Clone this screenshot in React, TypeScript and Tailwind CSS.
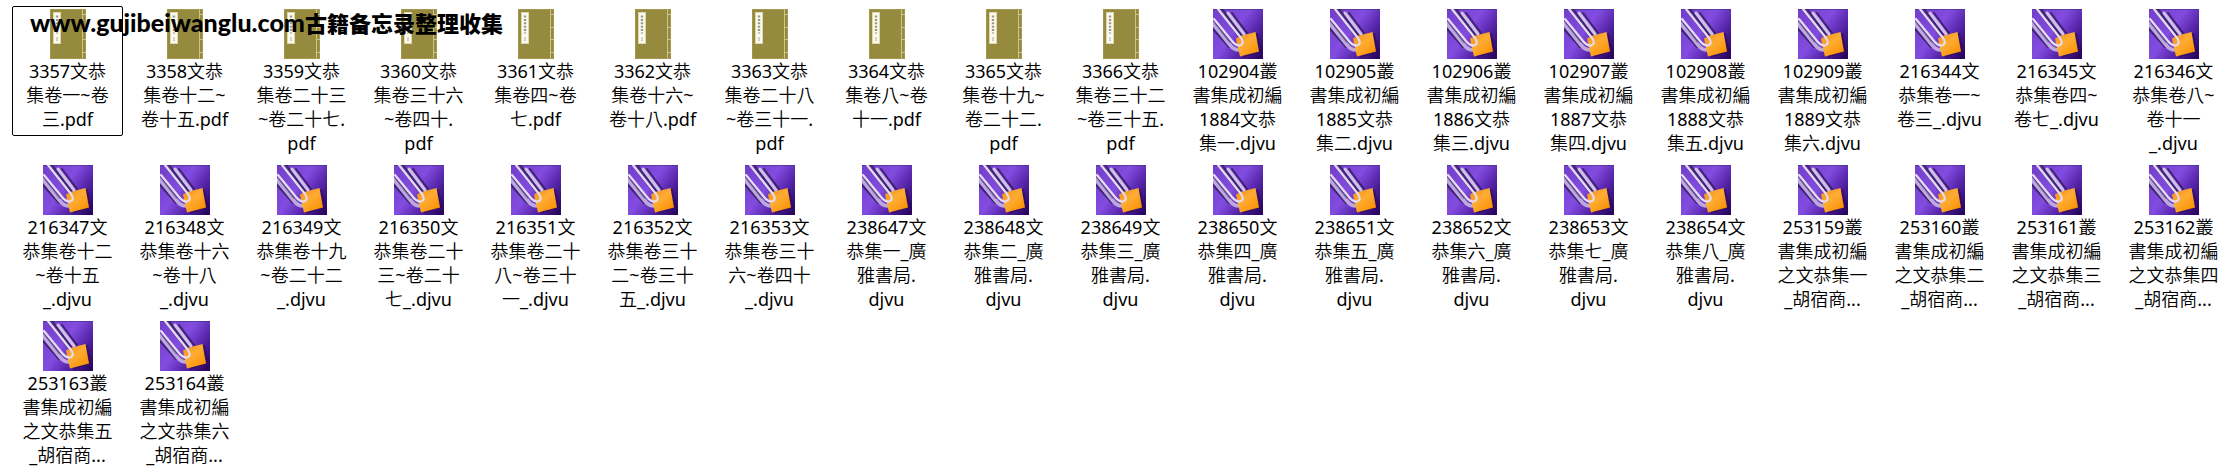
type FileKind = 'pdf' | 'djvu'

interface FileEntry {
  kind: FileKind
  lines: string[]
}

const pdf = (...lines: string[]): FileEntry => ({ kind: 'pdf', lines })
const djvu = (...lines: string[]): FileEntry => ({ kind: 'djvu', lines })

const files: FileEntry[] = [
  pdf('3357文恭', '集卷一~卷', '三.pdf'),
  pdf('3358文恭', '集卷十二~', '卷十五.pdf'),
  pdf('3359文恭', '集卷二十三', '~卷二十七.', 'pdf'),
  pdf('3360文恭', '集卷三十六', '~卷四十.', 'pdf'),
  pdf('3361文恭', '集卷四~卷', '七.pdf'),
  pdf('3362文恭', '集卷十六~', '卷十八.pdf'),
  pdf('3363文恭', '集卷二十八', '~卷三十一.', 'pdf'),
  pdf('3364文恭', '集卷八~卷', '十一.pdf'),
  pdf('3365文恭', '集卷十九~', '卷二十二.', 'pdf'),
  pdf('3366文恭', '集卷三十二', '~卷三十五.', 'pdf'),
  djvu('102904叢', '書集成初編', '1884文恭', '集一.djvu'),
  djvu('102905叢', '書集成初編', '1885文恭', '集二.djvu'),
  djvu('102906叢', '書集成初編', '1886文恭', '集三.djvu'),
  djvu('102907叢', '書集成初編', '1887文恭', '集四.djvu'),
  djvu('102908叢', '書集成初編', '1888文恭', '集五.djvu'),
  djvu('102909叢', '書集成初編', '1889文恭', '集六.djvu'),
  djvu('216344文', '恭集卷一~', '卷三_.djvu'),
  djvu('216345文', '恭集卷四~', '卷七_.djvu'),
  djvu('216346文', '恭集卷八~', '卷十一', '_.djvu'),
  djvu('216347文', '恭集卷十二', '~卷十五', '_.djvu'),
  djvu('216348文', '恭集卷十六', '~卷十八', '_.djvu'),
  djvu('216349文', '恭集卷十九', '~卷二十二', '_.djvu'),
  djvu('216350文', '恭集卷二十', '三~卷二十', '七_.djvu'),
  djvu('216351文', '恭集卷二十', '八~卷三十', '一_.djvu'),
  djvu('216352文', '恭集卷三十', '二~卷三十', '五_.djvu'),
  djvu('216353文', '恭集卷三十', '六~卷四十', '_.djvu'),
  djvu('238647文', '恭集一_廣', '雅書局.', 'djvu'),
  djvu('238648文', '恭集二_廣', '雅書局.', 'djvu'),
  djvu('238649文', '恭集三_廣', '雅書局.', 'djvu'),
  djvu('238650文', '恭集四_廣', '雅書局.', 'djvu'),
  djvu('238651文', '恭集五_廣', '雅書局.', 'djvu'),
  djvu('238652文', '恭集六_廣', '雅書局.', 'djvu'),
  djvu('238653文', '恭集七_廣', '雅書局.', 'djvu'),
  djvu('238654文', '恭集八_廣', '雅書局.', 'djvu'),
  djvu('253159叢', '書集成初編', '之文恭集一', '_胡宿商...'),
  djvu('253160叢', '書集成初編', '之文恭集二', '_胡宿商...'),
  djvu('253161叢', '書集成初編', '之文恭集三', '_胡宿商...'),
  djvu('253162叢', '書集成初編', '之文恭集四', '_胡宿商...'),
  djvu('253163叢', '書集成初編', '之文恭集五', '_胡宿商...'),
  djvu('253164叢', '書集成初編', '之文恭集六', '_胡宿商...'),
]

/** Thread-bound book cover, used as the PDF thumbnail. */
function BookIcon() {
  return (
    <svg viewBox="0 0 36 50" className="h-[50px] w-9" aria-hidden="true">
      <rect width="36" height="50" fill="#a79c55" />
      <rect x="0.7" y="0.7" width="34.6" height="48.6" fill="#958a3d" />
      <rect x="3" y="3" width="8" height="32" fill="#ddd8ae" />
      <rect x="4" y="4" width="6" height="30" fill="#fbfaf0" />
      <path
        d="M7 6.5v18"
        stroke="#9c9983"
        strokeWidth="2.4"
        strokeDasharray="2 1.4"
      />
      <path d="M7 28.5v3.5" stroke="#a3a08a" strokeWidth="1.4" strokeDasharray="1.2 0.8" />
      <path
        d="M32.5 0.5v49M32.5 5.5H36M32.5 18.5H36M32.5 30.5H36M32.5 43.5H36"
        stroke="#d3cb92"
        strokeWidth="0.9"
      />
    </svg>
  )
}

function DjvuGradients() {
  return (
    <svg className="absolute size-0" aria-hidden="true">
      <defs>
        <linearGradient id="djvu-bg" x1="0" y1="0.15" x2="1" y2="0.85">
          <stop offset="0" stopColor="#7440cc" />
          <stop offset="0.42" stopColor="#824ce0" />
          <stop offset="0.68" stopColor="#5a28ae" />
          <stop offset="1" stopColor="#2b0763" />
        </linearGradient>
        <linearGradient id="djvu-tag" x1="0" y1="0" x2="0.8" y2="1">
          <stop offset="0" stopColor="#f0901c" />
          <stop offset="0.5" stopColor="#ffac33" />
          <stop offset="1" stopColor="#f98f00" />
        </linearGradient>
      </defs>
    </svg>
  )
}

/** Paper clip holding an orange tag on a purple tile. */
function DjvuIcon() {
  return (
    <svg viewBox="0 0 50 50" className="size-[50px]" aria-hidden="true">
      <rect width="50" height="50" fill="url(#djvu-bg)" />
      <path d="M0 0.5H50" stroke="#45307a" strokeOpacity="0.6" />
      <path d="M30 27L45 24L48.5 42L30 49Z" fill="#2a0a55" fillOpacity="0.6" />
      <g fill="none" strokeLinecap="round">
        <path
          d="M9 0L29 27M19 4L34 24M0 20L16 38"
          stroke="#2c1752"
          strokeWidth="2"
          strokeOpacity="0.75"
        />
        <path d="M0 15L17 36Q21 41 26 41" stroke="#bda9dd" strokeWidth="3.6" />
      </g>
      <path d="M23 29.5L27 27L42.5 23L46 42.5L27 47.5L24.5 37Z" fill="url(#djvu-tag)" />
      <g fill="none" strokeLinecap="round">
        <path d="M15 4L31 25" stroke="#cfc0e6" strokeWidth="3" />
        <path d="M8 3L26 27M3 14L17 32" stroke="#4a3370" strokeWidth="3" strokeOpacity="0.6" />
        <path
          d="M5 0L28 29Q32 35 27 36.5Q23 37 19 32L1 10"
          stroke="#e6dcef"
          strokeWidth="2.2"
        />
      </g>
    </svg>
  )
}

function FileItem({ file, selected }: { file: FileEntry; selected: boolean }) {
  return (
    <button
      type="button"
      className={`flex w-full flex-col items-center rounded-xs border pt-0.5 pb-1 text-lg leading-6 text-black ${
        selected ? 'border-black' : 'border-transparent'
      }`}
    >
      {file.kind === 'pdf' ? <BookIcon /> : <DjvuIcon />}
      <span className="whitespace-pre text-center">{file.lines.join('\n')}</span>
    </button>
  )
}

export default function App() {
  return (
    <main className="relative bg-white pt-1.5 pl-3 font-['Noto_Sans','Noto_Sans_CJK_TC_DemiLight','Noto_Sans_CJK_TC',sans-serif]">
      <DjvuGradients />
      <ul className="grid grid-cols-[repeat(auto-fill,111px)] items-start gap-x-1.5 gap-y-0.5">
        {files.map((file, i) => (
          <li key={file.lines.join('')}>
            <FileItem file={file} selected={i === 0} />
          </li>
        ))}
      </ul>
      <p className="pointer-events-none absolute top-2 left-[30px] flex items-baseline font-['Lato','Noto_Sans_CJK_SC',sans-serif] leading-7 font-black whitespace-nowrap text-black">
        <span className="text-[25px]">www.gujibeiwanglu.com</span>
        <span className="text-[22px]">古籍备忘录整理收集</span>
      </p>
    </main>
  )
}
